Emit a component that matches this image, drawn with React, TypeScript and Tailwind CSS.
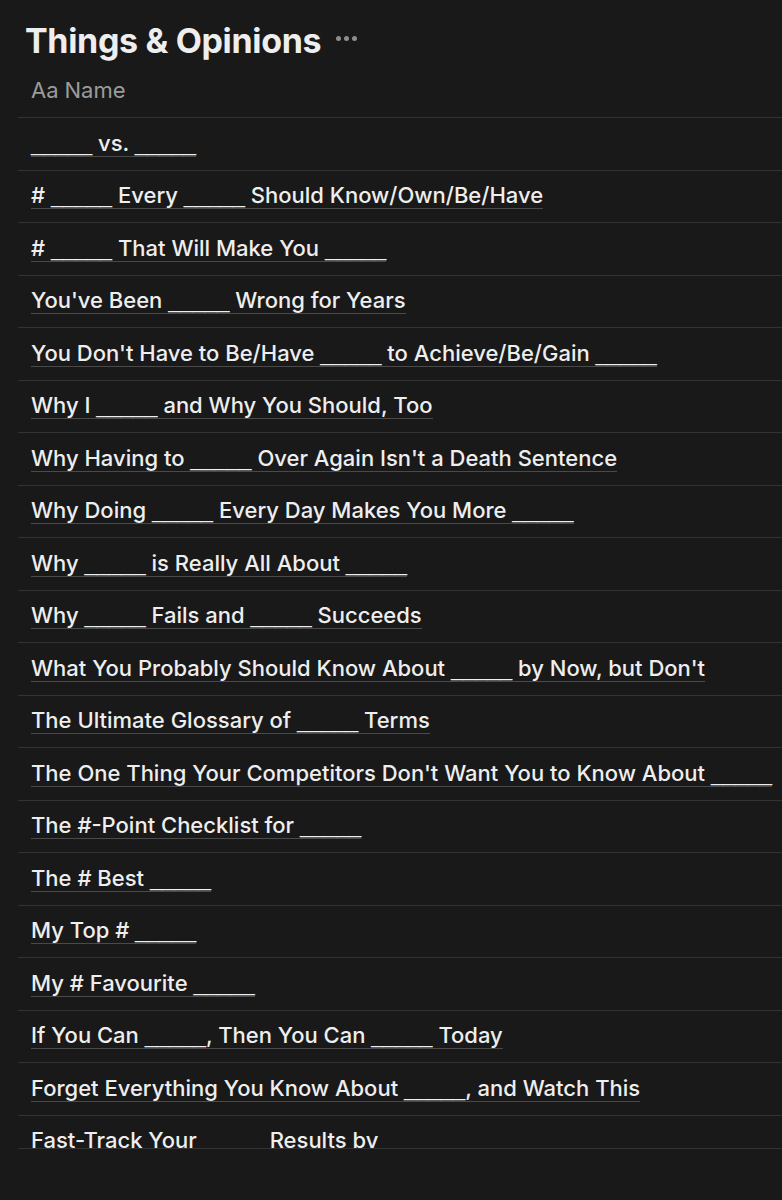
const titles = [
  '_____ vs. _____',
  '# _____ Every _____ Should Know/Own/Be/Have',
  '# _____ That Will Make You _____',
  "You've Been _____ Wrong for Years",
  "You Don't Have to Be/Have _____ to Achieve/Be/Gain _____",
  'Why I _____ and Why You Should, Too',
  "Why Having to _____ Over Again Isn't a Death Sentence",
  'Why Doing _____ Every Day Makes You More _____',
  'Why _____ is Really All About _____',
  'Why _____ Fails and _____ Succeeds',
  "What You Probably Should Know About _____ by Now, but Don't",
  'The Ultimate Glossary of _____ Terms',
  "The One Thing Your Competitors Don't Want You to Know About _____",
  'The #-Point Checklist for _____',
  'The # Best _____',
  'My Top # _____',
  'My # Favourite _____',
  'If You Can _____, Then You Can _____ Today',
  'Forget Everything You Know About _____, and Watch This',
  'Fast-Track Your _____ Results by _____',
];

// blanks are drawn in Liberation Sans: its underscore is wider, like the original
function Title({ text }: { text: string }) {
  return (
    <span className="text-[22px] font-medium leading-[24px] border-b border-[#4a4a4a]">
      {text.split(/(_+)/).map((part, i) =>
        part.startsWith('_') ? (
          <span key={i} className="font-['Liberation_Sans',sans-serif] font-normal">
            {part}
          </span>
        ) : (
          <span key={i}>{part}</span>
        )
      )}
    </span>
  );
}

export default function App() {
  return (
    <div className="min-h-[1200px] bg-[#191919] font-['Inter',sans-serif] text-[#eeeeee] overflow-hidden">
      <div className="flex items-center gap-[15px] pl-[25px] pt-[19px] h-[62px]">
        <h1 className="text-[34px] font-bold leading-none tracking-[-0.01em]">Things &amp; Opinions</h1>
        <span className="flex gap-[3px] mt-[-4px]">
          <span className="w-[5px] h-[5px] rounded-full bg-[#8c8c8c]" />
          <span className="w-[5px] h-[5px] rounded-full bg-[#8c8c8c]" />
          <span className="w-[5px] h-[5px] rounded-full bg-[#8c8c8c]" />
        </span>
      </div>

      <div className="ml-[18px]">
        <div className="h-[56px] flex items-center pl-[13px] pt-[2px] border-b border-[#333] text-[22px] text-[#9b9b9b]">
          <span className="mr-[6px]">Aa</span>
          <span>Name</span>
        </div>

        <div className="h-[1031px] overflow-hidden border-b border-[#333]">
          {titles.map((t, i) => (
            <div key={i} className="h-[52.5px] flex items-center pl-[13px] border-b border-[#333] whitespace-nowrap">
              <Title text={t} />
            </div>
          ))}
        </div>
      </div>
    </div>
  );
}
